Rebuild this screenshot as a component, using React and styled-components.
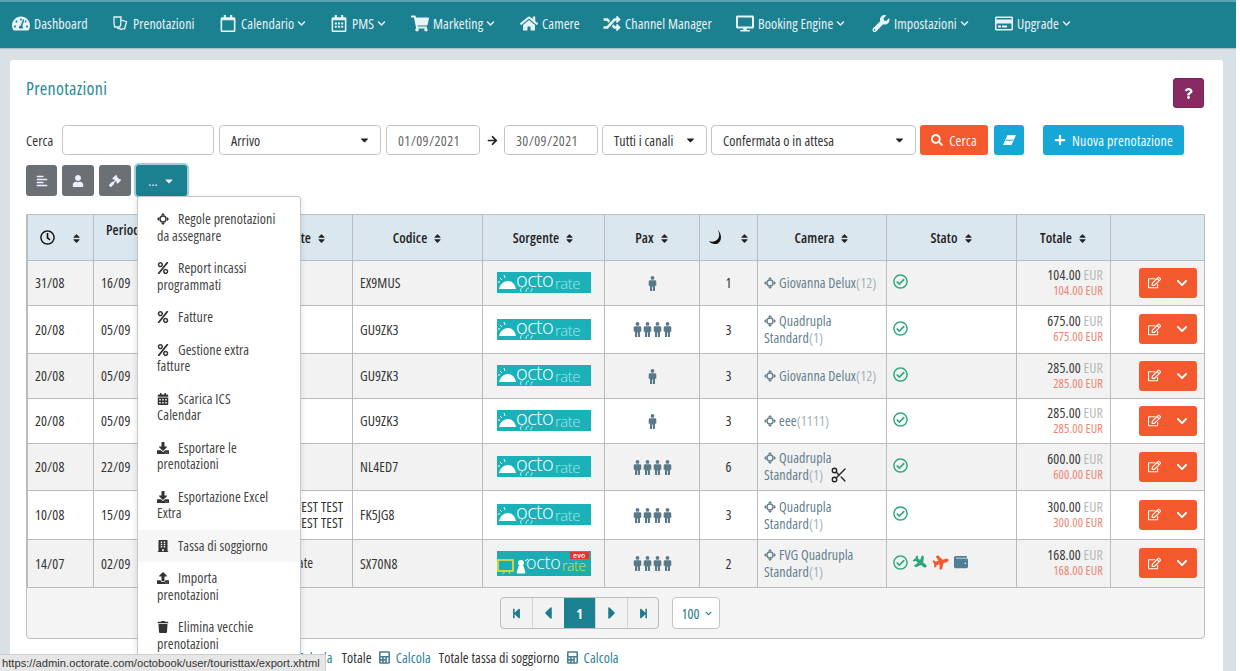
import React from 'react';
import styled, { createGlobalStyle } from 'styled-components';
import {
  FaTachometerAlt, FaRegCalendarAlt, FaShoppingCart, FaHome, FaRandom, FaDesktop, FaWrench, FaRegCreditCard,
  FaChevronDown, FaCalendarAlt, FaSearch, FaPlus, FaQuestion, FaAlignLeft, FaUser, FaGavel, FaCaretDown,
  FaRegClock, FaSort, FaPercent, FaDownload, FaBuilding, FaUpload, FaTrash, FaRegEdit,
  FaPlane, FaWallet, FaCalculator, FaStepBackward, FaStepForward, FaCaretLeft, FaCaretRight,
  FaArrowRight, FaRegCheckCircle, FaRegCalendar,
} from 'react-icons/fa';
import { Scissors } from 'lucide-react';

const Global = createGlobalStyle`
  html, body { margin: 0; padding: 0; background: #fff; height: 671px; overflow: hidden; }
  body { font-family: "Open Sans", "Lato", sans-serif; font-stretch: 75%; font-size: 14px; letter-spacing: 0.1px; color: #333; }
  button { font-stretch: inherit; letter-spacing: inherit; }
  * { box-sizing: border-box; }
`;

const Shell = styled.div`
  width: 1236px;
  height: 671px;
  background: #d9e0e6;
  overflow: hidden;
`;
const Nav = styled.nav`
  height: 48px;
  background: #1b8090;
  border-top: 2px solid #57a5b3;
  box-shadow: 0 1px 1px #a9c4cb;
  display: flex;
  align-items: center;
  padding: 0 0 4px 12px;
  color: #e8f3f5;
`;
const NavItem = styled.div`
  display: flex;
  align-items: center;
  width: ${p => p.$w}px;
  flex: none;
  gap: 4px;
  font-size: 14px;
  white-space: nowrap;
  svg.main { width: 18px; height: 17px; flex: none; }
  svg.chev { width: 9px; height: 9px; margin-left: -1px; }
`;
const Panel = styled.main`
  position: relative;
  margin: 12px 13px 0 10px;
  height: 620px;
  padding: 18px 16px 0;
  background: #fff;
  border-radius: 3px;
`;
const TitleRow = styled.header`
  display: flex;
  justify-content: space-between;
  height: 47px;
  margin-right: 3px;
`;
const Title = styled.h1`
  margin: 0;
  font-size: 18px;
  line-height: 20px;
  letter-spacing: 0.3px;
  font-weight: 400;
  color: #2b8b9b;
`;
const HelpBtn = styled.button`
  width: 31px;
  height: 30px;
  border: 1px solid #7a2559;
  border-radius: 3px;
  background: #8a2a63;
  color: #fff;
  padding: 0;
  display: flex;
  align-items: center;
  justify-content: center;
  svg { width: 9px; height: 11px; }
`;
const SearchRow = styled.div`
  display: flex;
  align-items: center;
  height: 30px;
`;
const Label = styled.label`
  width: 36px;
  color: #333;
`;
const Field = styled.div`
  height: 30px;
  width: ${p => p.$w}px;
  margin-right: ${p => p.$mr ?? 5}px;
  flex: none;
  border: 1px solid #c4c4c4;
  border-radius: 4px;
  background: #fff;
  display: flex;
  align-items: center;
  justify-content: space-between;
  padding: 0 11px 0 11px;
  color: ${p => (p.$muted ? '#666' : '#333')};
  letter-spacing: ${p => (p.$muted ? '0.4px' : '0.1px')};
  white-space: nowrap;
  svg { width: 9px; height: 12px; color: #222; }
`;
const ArrowBox = styled.span`
  width: 24px;
  flex: none;
  display: flex;
  justify-content: center;
  svg { width: 11px; height: 11px; color: #222; }
`;
const ActionBtn = styled.button`
  height: 30px;
  width: ${p => p.$w}px;
  margin-left: ${p => p.$ml ?? 0}px;
  flex: none;
  border: none;
  border-radius: 3px;
  background: ${p => p.$bg};
  color: #f4fbfd;
  font: inherit;
  letter-spacing: 0.2px;
  padding: 0;
  display: flex;
  align-items: center;
  justify-content: center;
  gap: 6px;
  svg { width: 12px; height: 12px; }
  svg.eraser { width: 15px; height: 12px; }
`;
const ToolRow = styled.div`
  display: flex;
  gap: 5px;
  margin-top: 10px;
  height: 31px;
`;
const ToolBtn = styled.button`
  width: ${p => p.$w || 32}px;
  height: 31px;
  border: none;
  border-radius: 3px;
  background: ${p => (p.$active ? '#1b8090' : '#6b7075')};
  box-shadow: ${p => (p.$active ? '0 0 0 2px #9fcfd6' : 'none')};
  color: #eef;
  padding: 0;
  display: flex;
  align-items: center;
  justify-content: center;
  gap: 5px;
  font: inherit;
  svg { width: 12px; height: 12px; }
`;
const TableWrap = styled.section`
  margin-top: 18px;
  width: 1179px;
  border: 1px solid #bcc0c3;
  border-radius: 0 0 4px 4px;
  background: #f4f4f4;
`;
const Table = styled.table`
  border-collapse: collapse;
  table-layout: fixed;
  width: 1177px;
`;
const Th = styled.th`
  height: 45px;
  background: #dbe7ef;
  border: 1px solid #b7bcc0;
  border-top: none;
  font-size: 14px;
  font-weight: 600;
  color: #222;
  text-align: ${p => (p.$top ? 'left' : p.$end ? 'right' : 'center')};
  padding: 0 ${p => (p.$end ? 26 : 6)}px 0 ${p => (p.$top ? 12 : 6)}px;
  vertical-align: ${p => (p.$top ? 'top' : 'middle')};
  padding-top: ${p => (p.$top ? '5px' : '0')};
  svg.sort { width: 9px; height: 11px; margin-left: 6px; vertical-align: -1px; }
  svg.ico { width: 15px; height: 15px; vertical-align: -2px; margin-right: 11px; color: #111; }
`;
const Tr = styled.tr`
  height: ${p => p.$h}px;
  background: ${p => (p.$alt ? '#f2f2f2' : '#fff')};
`;
const Td = styled.td`
  border: 1px solid #b7bcc0;
  padding: 0 7px;
  color: #333;
  text-align: ${p => p.$align || 'left'};
  line-height: 17px;
`;
const GuestCell = styled(Td)`
  padding-left: 60px;
  padding-right: 0;
  white-space: pre;
  line-height: 16px;
`;
const RoomCell = styled(Td)`
  padding: 0 6px;
`;
const RoomName = styled.span`
  color: #64808e;
  svg.move { margin-right: 3px; vertical-align: -1px; }
  small { font-size: 14px; color: #a6b3ba; }
  svg.cut { color: #222; margin-left: 7px; vertical-align: -4px; }
`;
const Pax = styled.div`
  display: flex;
  justify-content: center;
  gap: 1px;
  color: #59798a;
  margin-top: 1px;
  svg { width: 9px; height: 15px; }
`;
const StatusIcons = styled.div`
  display: flex;
  align-items: center;
  gap: 5px;
  margin-left: -1px;
  margin-top: -2px;
  svg { flex: none; }
`;
const Arrival = styled(FaPlane)`
  transform: rotate(38deg);
`;
const Departure = styled(FaPlane)`
  transform: rotate(-16deg);
`;
const Amount = styled.div`
  color: #3a3a3a;
  line-height: 16px;
  em { font-style: normal; color: #b8b8b8; }
`;
const Paid = styled.div`
  color: #ef8370;
  font-size: 12.5px;
  line-height: 16px;
`;
const RowAction = styled.div`
  display: flex;
  width: 58px;
  height: 30px;
  margin-left: auto;
  background: #f4592e;
  border-radius: 3px;
  color: #fff;
  align-items: center;
  justify-content: space-between;
  padding: 0 9px;
  svg:first-child { width: 13px; height: 13px; }
  svg:last-child { width: 12px; height: 12px; }
`;
const Footer = styled.div`
  height: 50px;
  display: flex;
  align-items: center;
  justify-content: center;
  gap: 13px;
  padding-right: 11px;
  padding-top: 1px;
`;
const Pager = styled.div`
  display: flex;
  height: 32px;
  border: 1px solid #bbb;
  border-radius: 4px;
  overflow: hidden;
  background: #f2f2f2;
`;
const PageBtn = styled.span`
  width: 31.6px;
  display: flex;
  align-items: center;
  justify-content: center;
  background: ${p => (p.$active ? '#1b8090' : 'transparent')};
  color: ${p => (p.$active ? '#fff' : '#1b7a8c')};
  border-left: ${p => (p.$first || p.$active ? 'none' : '1px solid #d4d4d4')};
  font-weight: 700;
  svg { width: ${p => p.$big ? 20 : 11}px; height: ${p => p.$big ? 20 : 11}px; }
`;
const PageSize = styled.div`
  width: 48px;
  height: 32px;
  border: 1px solid #c4c4c4;
  border-radius: 4px;
  background: #fff;
  color: #1b7a8c;
  display: flex;
  align-items: center;
  justify-content: space-between;
  padding: 0 7px 0 8px;
  svg { width: 7px; height: 7px; }
`;
const Totals = styled.div`
  display: flex;
  align-items: center;
  margin-top: 10px;
  height: 17px;
  white-space: nowrap;
  color: #333;
`;
const TotalLabel = styled.span`
  margin-left: ${p => p.$ml}px;
`;
const CalcLink = styled.span`
  color: #2f7f95;
  margin-left: 7px;
  display: inline-flex;
  align-items: center;
  gap: 6px;
  svg { width: 11px; height: 13px; color: #4a7f8f; }
`;
const Menu = styled.ul`
  position: absolute;
  left: 127px;
  top: 136px;
  width: 164px;
  margin: 0;
  padding: 6px 0;
  list-style: none;
  background: #fff;
  border: 1px solid #c8c8c8;
  border-radius: 3px;
  z-index: 5;
  box-shadow: 0 2px 6px rgba(0,0,0,.12);
`;
const MenuItem = styled.li`
  padding: 8px 10px 8px 19px;
  line-height: 16.5px;
  color: #444;
  white-space: pre-line;
  background: ${p => (p.$hover ? '#f6f6f6' : 'transparent')};
  svg { width: 12px; height: 12px; color: #333; margin-right: 9px; vertical-align: -1px; }
`;
const StatusBar = styled.div`
  position: fixed;
  left: 0;
  bottom: 0;
  width: 326px;
  height: 17px;
  background: #e6e6e6;
  border: 1px solid #cfcfcf;
  border-left: none;
  border-bottom: none;
  font-family: "Liberation Sans", sans-serif;
  font-stretch: normal;
  letter-spacing: 0;
  font-size: 11.2px;
  line-height: 16px;
  padding-left: 2px;
  color: #333;
  white-space: nowrap;
  z-index: 9;
`;
const LogoSvg = styled.svg`
  display: block;
  margin: 0 auto;
  font-family: "Open Sans", sans-serif;
  font-stretch: 100%;
  font-weight: 300;
`;

const TicketIcon = ({ className }) => (
  <svg className={className} viewBox="0 0 18 17" fill="none" stroke="currentColor" strokeWidth="1.3">
    <path d="M3 2h7l-.4 8.500c-.6.4-.8 1-.8 1.500H3.600L3 8z" />
    <path d="M10 5l5.500 1.600-2 7.400c-1-.5-2-.3-2.800.4L6 13" />
  </svg>
);
const MoveIcon = () => (
  <svg className="move" width="12" height="12" viewBox="0 0 12 12" fill="currentColor">
    <path d="M6 0l2.200 2.200H3.800zM6 12l2.200-2.200H3.800zM0 6l2.200-2.200v4.400zM12 6L9.800 3.800v4.400z" />
    <circle cx="6" cy="6" r="3" fill="none" stroke="currentColor" strokeWidth="1.400" />
  </svg>
);
const Moon = () => (
  <svg className="ico" viewBox="0 0 14 14" fill="#111">
    <path d="M9 0c2 3 2 6.500 0 8.700C7 11 4 11.300 1 10.500c1.800 2.400 5.600 3.500 8.500 1.800C13.200 10 13 3.500 9 0z" />
  </svg>
);
const Person = () => (
  <svg viewBox="0 0 9 15" fill="currentColor">
    <circle cx="4.500" cy="1.900" r="1.900" />
    <path d="M2 4.200h5q1.300 0 1.300 1.300v4.300H7V15H4.900v-4.600h-.8V15H2V9.800H.7V5.500q0-1.300 1.300-1.300z" />
  </svg>
);
const Eraser = () => (
  <svg className="eraser" viewBox="0 0 15 12" fill="#fff">
    <path d="M5.500 1H14L9.500 11H1z" />
    <path d="M3.500 6.200h7.500" stroke="#17a7d6" strokeWidth="1" />
  </svg>
);

const Logo = () => (
  <LogoSvg width="94" height="21" viewBox="0 0 94 21">
    <rect width="94" height="21" fill="#1bb1b9" />
    <path d="M2 17c1-5 5-8 9-8s7 3 8 8z" fill="#fff" />
    <path d="M3 6l2 2M7 3l1 3M1 10h2" stroke="#fff" strokeWidth="1" />
    <path d="M24 20c-1-3 0-4 2-5M29 20c0-3 1-4 3-4M34 20c0-2 0-3 2-3" stroke="#bdeff0" strokeWidth="1" fill="none" />
    <text x="19" y="15" fontSize="20" letterSpacing="-0.6" fill="#fff">octo</text>
    <text x="58" y="17" fontSize="15" letterSpacing="-0.5" fill="#9fe8e8">rate</text>
  </LogoSvg>
);
const LogoEvo = () => (
  <LogoSvg width="94" height="25" viewBox="0 0 94 25">
    <rect width="94" height="25" fill="#1bacb4" />
    <rect x="1" y="9" width="15" height="11" fill="none" stroke="#d5dc3c" strokeWidth="1.800" />
    <path d="M5 23l4-3h3l1 3" stroke="#d5dc3c" fill="none" />
    <circle cx="24" cy="12" r="3" fill="#fff" />
    <path d="M20 22l2-7h4l2 7zM28 10l3-2" fill="#fff" stroke="#fff" />
    <text x="29" y="18" fontSize="18" letterSpacing="-0.3" fill="#fff">octo</text>
    <text x="65" y="20" fontSize="14" letterSpacing="-0.4" fill="#d5e43c">rate</text>
    <rect x="73" y="1" width="19" height="7" fill="#e5352b" />
    <text x="76" y="7" fontSize="7" fontWeight="600" fill="#fff">evo</text>
  </LogoSvg>
);

const navItems = [
  [FaTachometerAlt, 'Dashboard', false, 99],
  [TicketIcon, 'Prenotazioni', false, 108],
  [FaRegCalendar, 'Calendario', true, 111],
  [FaRegCalendarAlt, 'PMS', true, 81],
  [FaShoppingCart, 'Marketing', true, 109],
  [FaHome, 'Camere', false, 83],
  [FaRandom, 'Channel Manager', false, 133],
  [FaDesktop, 'Booking Engine', true, 136],
  [FaWrench, 'Impostazioni', true, 123],
  [FaRegCreditCard, 'Upgrade', true, 90],
];

const rows = [
  ['31/08', '16/09', '', 'EX9MUS', 1, 1, ['Giovanna Delux', '(12)'], '104.00', 45, true],
  ['20/08', '05/09', '', 'GU9ZK3', 4, 3, ['Quadrupla Standard', '(1)'], '675.00', 48, false],
  ['20/08', '05/09', '', 'GU9ZK3', 1, 3, ['Giovanna Delux', '(12)'], '285.00', 45, true],
  ['20/08', '05/09', '', 'GU9ZK3', 1, 3, ['eee', '(1111)'], '285.00', 45, false],
  ['20/08', '22/09', '', 'NL4ED7', 4, 6, ['Quadrupla Standard', '(1)'], '600.00', 47, true, 'cut'],
  ['10/08', '15/09', 'TEST TEST TEST\nTEST TEST TEST', 'FK5JG8', 4, 3, ['Quadrupla Standard', '(1)'], '300.00', 49, false],
  ['14/07', '02/09', 'Octorate', 'SX70N8', 4, 2, ['FVG Quadrupla Standard', '(1)'], '168.00', 48, true, 'extra'],
];

const menu = [
  [MoveIcon, 'Regole prenotazioni\nda assegnare'],
  [FaPercent, 'Report incassi\nprogrammati'],
  [FaPercent, 'Fatture'],
  [FaPercent, 'Gestione extra\nfatture'],
  [FaCalendarAlt, 'Scarica ICS\nCalendar'],
  [FaDownload, 'Esportare le\nprenotazioni'],
  [FaDownload, 'Esportazione Excel\nExtra'],
  [FaBuilding, 'Tassa di soggiorno', true],
  [FaUpload, 'Importa\nprenotazioni'],
  [FaTrash, 'Elimina vecchie\nprenotazioni'],
];

const widths = [66, 117, 142, 130, 122, 95, 58, 129, 130, 94, 94];

export default function App() {
  return (
    <Shell>
      <Global />
      <Nav>
        {navItems.map(([Icon, label, chev, w]) => (
          <NavItem key={label} $w={w}>
            <Icon className="main" />
            {label}
            {chev && <FaChevronDown className="chev" />}
          </NavItem>
        ))}
      </Nav>
      <Panel>
        <TitleRow>
          <Title>Prenotazioni</Title>
          <HelpBtn aria-label="Aiuto"><FaQuestion /></HelpBtn>
        </TitleRow>
        <SearchRow>
          <Label>Cerca</Label>
          <Field $w={152} />
          <Field $w={162}>Arrivo<FaCaretDown /></Field>
          <Field $w={94} $mr={0} $muted>01/09/2021</Field>
          <ArrowBox><FaArrowRight /></ArrowBox>
          <Field $w={94} $mr={4} $muted>30/09/2021</Field>
          <Field $w={105} $mr={4}>Tutti i canali<FaCaretDown /></Field>
          <Field $w={205} $mr={4}>Confermata o in attesa<FaCaretDown /></Field>
          <ActionBtn $w={68} $bg="#f4592e"><FaSearch />Cerca</ActionBtn>
          <ActionBtn $w={30} $ml={6} $bg="#17a7d6"><Eraser /></ActionBtn>
          <ActionBtn $w={141} $ml={19} $bg="#17a7d6"><FaPlus />Nuova prenotazione</ActionBtn>
        </SearchRow>
        <ToolRow>
          <ToolBtn $w={31}><FaAlignLeft /></ToolBtn>
          <ToolBtn><FaUser /></ToolBtn>
          <ToolBtn><FaGavel /></ToolBtn>
          <ToolBtn $w={51} $active>...<FaCaretDown /></ToolBtn>
        </ToolRow>
        <Menu>
          {menu.map(([Icon, label, hover]) => (
            <MenuItem key={label} $hover={hover}><Icon />{label}</MenuItem>
          ))}
        </Menu>
        <TableWrap>
          <Table>
            <colgroup>{widths.map((w, i) => <col key={i} style={{ width: w }} />)}</colgroup>
            <thead>
              <tr>
                <Th><FaRegClock className="ico" /><FaSort className="sort" /></Th>
                <Th $top>Periodo</Th>
                <Th $end>Cliente<FaSort className="sort" /></Th>
                <Th>Codice<FaSort className="sort" /></Th>
                <Th>Sorgente<FaSort className="sort" /></Th>
                <Th>Pax<FaSort className="sort" /></Th>
                <Th><Moon /><FaSort className="sort" /></Th>
                <Th>Camera<FaSort className="sort" /></Th>
                <Th>Stato<FaSort className="sort" /></Th>
                <Th>Totale<FaSort className="sort" /></Th>
                <Th />
              </tr>
            </thead>
            <tbody>
              {rows.map((r, i) => (
                <Tr key={i} $h={r[8]} $alt={r[9]}>
                  <Td>{r[0]}</Td>
                  <Td>{r[1]}</Td>
                  <GuestCell>{r[2]}</GuestCell>
                  <Td>{r[3]}</Td>
                  <Td>{r[10] === 'extra' ? <LogoEvo /> : <Logo />}</Td>
                  <Td $align="center">
                    <Pax>{Array.from({ length: r[4] }).map((_, k) => <Person key={k} />)}</Pax>
                  </Td>
                  <Td $align="center">{r[5]}</Td>
                  <RoomCell>
                    <RoomName>
                      <MoveIcon />{r[6][0]}<small>{r[6][1]}</small>
                      {r[10] === 'cut' && <Scissors className="cut" size={18} strokeWidth={1.800} />}
                    </RoomName>
                  </RoomCell>
                  <Td>
                    <StatusIcons>
                      <FaRegCheckCircle size={15} color="#2aa57e" />
                      {r[10] === 'extra' && (
                        <>
                          <Arrival size={15} color="#2aa57e" />
                          <Departure size={16} color="#f4592e" />
                          <FaWallet size={14} color="#4f7f96" />
                        </>
                      )}
                    </StatusIcons>
                  </Td>
                  <Td $align="right">
                    <Amount>{r[7]} <em>EUR</em></Amount>
                    <Paid>{r[7]} EUR</Paid>
                  </Td>
                  <Td><RowAction><FaRegEdit /><FaChevronDown /></RowAction></Td>
                </Tr>
              ))}
            </tbody>
          </Table>
          <Footer>
            <Pager>
              <PageBtn $first><FaStepBackward /></PageBtn>
              <PageBtn $big><FaCaretLeft /></PageBtn>
              <PageBtn $active>1</PageBtn>
              <PageBtn $big><FaCaretRight /></PageBtn>
              <PageBtn><FaStepForward /></PageBtn>
            </Pager>
            <PageSize>100<FaChevronDown /></PageSize>
          </Footer>
        </TableWrap>
        <Totals>
          <TotalLabel $ml={189}>Totale netto</TotalLabel>
          <CalcLink><FaCalculator />Calcola</CalcLink>
          <TotalLabel $ml={9}>Totale</TotalLabel>
          <CalcLink><FaCalculator />Calcola</CalcLink>
          <TotalLabel $ml={8}>Totale tassa di soggiorno</TotalLabel>
          <CalcLink><FaCalculator />Calcola</CalcLink>
        </Totals>
      </Panel>
      <StatusBar>https://admin.octorate.com/octobook/user/touristtax/export.xhtml</StatusBar>
    </Shell>
  );
}
